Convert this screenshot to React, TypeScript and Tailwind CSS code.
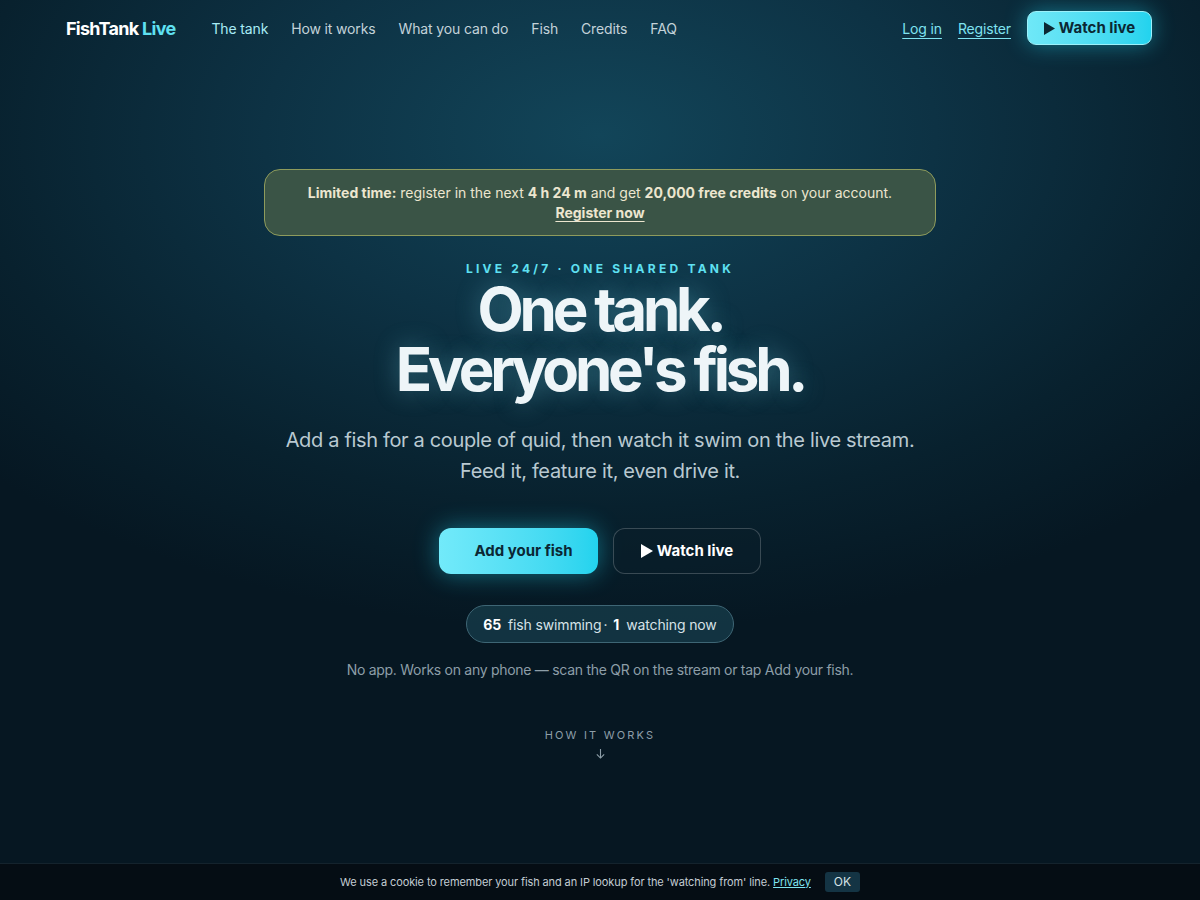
import React from "react";

const Play = ({ className }: { className?: string }) => (
  <svg viewBox="0 0 12 14" className={className} fill="currentColor">
    <path d="M0 0 L12 7 L0 14 Z" />
  </svg>
);

export default function App() {
  return (
    <div
      className="relative min-h-[900px] w-full overflow-hidden text-white"
      style={{
        fontFamily: "Inter, 'Noto Sans', sans-serif",
        background:
          "radial-gradient(ellipse 70% 55% at 50% 15%, #124559 0%, #0d3244 40%, #08212e 75%, #061722 100%)",
      }}
    >
      {/* Nav */}
      <header className="flex h-[56px] items-center justify-between pl-[66px] pr-[48px]">
        <div className="flex items-center">
          <div className="text-[18px] font-bold tracking-[-0.04em]">
            <span className="text-white">FishTank</span>{" "}
            <span className="text-[#5fe1f2]">Live</span>
          </div>
          <nav className="ml-[36px] flex items-center gap-[23px] text-[14px] tracking-[-0.01em] text-[#c3d2d9]">
            <a className="text-[#a8ecf5]">The tank</a>
            <a>How it works</a>
            <a>What you can do</a>
            <a>Fish</a>
            <a>Credits</a>
            <a>FAQ</a>
          </nav>
        </div>
        <div className="flex items-center">
          <a className="text-[14px] tracking-[-0.01em] text-[#7fe3f0] underline underline-offset-[4px]">Log in</a>
          <a className="ml-[16px] text-[14px] tracking-[-0.01em] text-[#7fe3f0] underline underline-offset-[4px]">Register</a>
          <button className="ml-[16px] flex h-[34px] w-[125px] items-center justify-center gap-[4px] rounded-[9px] border border-[#9cf1fa] bg-gradient-to-r from-[#6fe8f7] to-[#22d3ee] text-[15px] font-bold text-[#0b2733] shadow-[0_0_22px_rgba(34,211,238,0.45)]">
            <Play className="h-[13px] w-[11px]" />
            Watch live
          </button>
        </div>
      </header>

      {/* Hero */}
      <main className="flex flex-col items-center pt-[113px]">
        <div className="flex w-[672px] flex-col items-center rounded-[16px] border border-[#8e9b5c] bg-[#3a5446] pb-[12px] pt-[13px] text-[14px] leading-[20px] text-[#ece6cf]">
          <p>
            <b className="font-bold">Limited time:</b> register in the next{" "}
            <b className="font-bold">4 h 24 m</b> and get{" "}
            <b className="font-bold">20,000 free credits</b> on your account.
          </p>
          <a className="font-bold underline underline-offset-[3px]">Register now</a>
        </div>

        <p className="mt-[25px] text-[12px] font-bold leading-[16px] tracking-[0.27em] text-[#5fe1f2]">
          LIVE 24/7 · ONE SHARED TANK
        </p>

        <h1
          className="mt-[2px] text-center text-[60px] font-bold leading-[60px] tracking-[-0.07em] text-[#eef5f8]"
          style={{ textShadow: "0 0 24px rgba(120,220,240,0.35)" }}
        >
          One tank.
          <br />
          Everyone's fish.
        </h1>

        <p className="mt-[26px] text-center text-[20px] leading-[31px] tracking-[-0.017em] text-[#b9c9d1]">
          Add a fish for a couple of quid, then watch it swim on the live stream.
          <br />
          Feed it, feature it, even drive it.
        </p>

        <div className="mt-[41px] flex items-center gap-[15px]">
          <button className="flex h-[46px] w-[159px] items-center justify-center rounded-[12px] bg-gradient-to-r from-[#72eafa] to-[#22d3ee] pl-[10px] text-[15px] font-bold text-[#0b2733] shadow-[0_0_24px_rgba(34,211,238,0.45)]">
            Add your fish
          </button>
          <button className="flex h-[46px] w-[148px] items-center justify-center gap-[4px] rounded-[12px] border border-[#ffffff33] bg-[#0a1e29]/60 text-[15px] font-bold text-white">
            <Play className="h-[14px] w-[12px]" />
            Watch live
          </button>
        </div>

        <div className="mt-[31px] flex h-[38px] items-center rounded-full border border-[#3e6675] bg-[#18404f]/70 px-[16px] text-[14px] tracking-[-0.01em] text-[#d6e2e7]">
          <b className="font-bold text-white">65</b>
          <span className="ml-[7px]">fish swimming</span>
          <span className="ml-[2px]">·</span>
          <b className="ml-[6px] font-bold text-white">1</b>
          <span className="ml-[7px]">watching now</span>
        </div>

        <p className="mt-[16px] text-[14px] tracking-[-0.02em] text-[#8d9ea8]">
          No app. Works on any phone — scan the QR on the stream or tap Add your fish.
        </p>

        <div className="mt-[47px] flex flex-col items-center text-[#8d9ea8]">
          <span className="text-[11px] tracking-[0.2em]">HOW IT WORKS</span>
          <svg viewBox="0 0 12 12" className="mt-[4px] h-[11px] w-[11px]" fill="none" stroke="currentColor" strokeWidth="1.2">
            <path d="M6 1 V11 M2 7 L6 11 L10 7" />
          </svg>
        </div>
      </main>

      {/* Cookie bar */}
      <div className="absolute bottom-0 left-0 right-0 flex h-[37px] items-center justify-center border-t border-[#14232d] bg-[#050d14] text-[11px] tracking-[-0.01em] text-[#c3ccd3]">
        <span>
          We use a cookie to remember your fish and an IP lookup for the 'watching from' line.{" "}
          <a className="text-[#7fe3f0] underline">Privacy</a>
        </span>
        <button className="ml-[14px] h-[20px] rounded-[3px] bg-[#143444] px-[9px] text-[12px] text-[#d6e2e7]">OK</button>
      </div>
    </div>
  );
}
